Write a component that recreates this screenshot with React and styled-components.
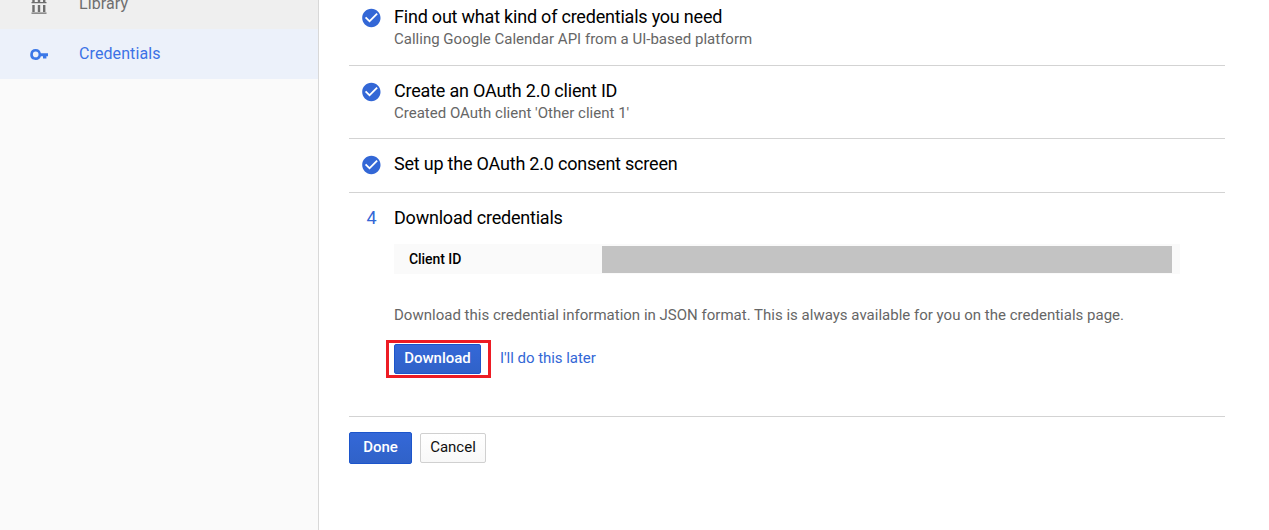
import React from "react";
import styled, { createGlobalStyle } from "styled-components";

const GlobalStyle = createGlobalStyle`
  * { box-sizing: border-box; }
  body {
    margin: 0;
    background: #fff;
    font-family: Roboto, "Liberation Sans", sans-serif;
    overflow: hidden;
  }
`;

const Page = styled.div`
  display: flex;
  height: 530px;
  overflow: hidden;
`;

const Sidebar = styled.nav`
  flex: none;
  width: 319px;
  background: #fafafa;
  border-right: 1px solid #d8d8d8;
`;

const NavItem = styled.a`
  display: flex;
  align-items: center;
  height: 50px;
  padding-left: 29px;
  font-size: 16px;
  line-height: 20px;
  letter-spacing: 0.1px;
  color: ${(p) => (p.$active ? "#3b72e6" : "#6e6e6e")};
  background: ${(p) => (p.$active ? "#ecf1fa" : "#efefef")};
  &:first-child { margin-top: -21px; }
  svg { flex: none; margin-right: 30px; }
`;

const Main = styled.main`
  width: 876px;
  margin-left: 30px;
`;

const Step = styled.section`
  display: flex;
  height: ${(p) => p.$height}px;
  padding-top: ${(p) => p.$top ?? 14}px;
  border-bottom: 1px solid #d3d3d3;
`;

const Marker = styled.div`
  flex: none;
  display: flex;
  justify-content: center;
  width: 45px;
  height: 22px;
  font-size: 18px;
  line-height: 22px;
  color: #3367d6;
  svg { margin-top: 1px; }
`;

const StepBody = styled.div`
  flex: 1;
  min-width: 0;
`;

const StepTitle = styled.h2`
  margin: 0;
  font-size: 18px;
  font-weight: 400;
  line-height: 22px;
  letter-spacing: -0.21px;
  color: #000;
  white-space: nowrap;
`;

const Description = styled.p`
  margin: 0;
  font-size: 15px;
  line-height: 22px;
  letter-spacing: 0.01px;
  color: #666;
  white-space: nowrap;
`;

const CredentialRow = styled.div`
  display: flex;
  align-items: center;
  width: 786px;
  height: 30px;
  margin: 15px 0 30px;
  background: #fafafa;
`;

const CredentialLabel = styled.div`
  width: 208px;
  padding-left: 15px;
  font-size: 14px;
  font-weight: 500;
  letter-spacing: -0.06px;
  color: #000;
`;

const RedactedValue = styled.div`
  width: 570px;
  height: 27px;
  margin-top: 1px;
  background: #c3c3c3;
`;

const Actions = styled.div`
  display: flex;
  align-items: center;
  margin: 14px 0 0 -8px;
`;

const Highlight = styled.div`
  display: flex;
  align-items: center;
  width: 105px;
  height: 38px;
  padding-left: 5px;
  border: 3px solid #ed1c24;
`;

const Button = styled.button`
  width: ${(p) => p.$width}px;
  height: ${(p) => p.$height}px;
  padding: 0 0 3px;
  border: 1px solid ${(p) => (p.$primary ? "#1c55cb" : "#d0d0d0")};
  border-radius: 2px;
  background: ${(p) =>
    p.$primary
      ? "linear-gradient(#3468d8, #3062c8)"
      : "linear-gradient(#fff, #f8f8f8)"};
  color: ${(p) => (p.$primary ? "#fff" : "#111")};
  font-family: inherit;
  font-size: 15px;
  font-weight: ${(p) => (p.$primary ? 500 : 400)};
  white-space: nowrap;
`;

const LaterLink = styled.a`
  margin: -3px 0 0 9px;
  font-size: 15px;
  line-height: 20px;
  letter-spacing: -0.04px;
  color: #3367d6;
`;

const Footer = styled.footer`
  display: flex;
  align-items: center;
  gap: 8px;
  padding-top: 15px;
`;

const LibraryIcon = () => (
  <svg width="20" height="20" viewBox="0 0 20 20" fill="#6e6e6e">
    <path d="M3.3 3h2.4v5H3.3zM8.8 3h2.4v5H8.8zM14 3h2.4v5H14zM2.5 8h15v1.2h-15zM3.3 11h2.4v7H3.3zM8.8 11h2.4v7H8.8zM14 11h2.4v7H14zM2.5 18.4h15V19.8h-15z" />
  </svg>
);

const KeyIcon = () => (
  <svg width="20" height="20" viewBox="0 0 20 20" fill="#3b78e7">
    <path
      fillRule="evenodd"
      d="M6.7 5a5.5 5.5 0 1 0 5.2 7.3H14V14.6h3.4v-2.3H19V9.2H11.9A5.5 5.5 0 0 0 6.7 5zm0 2.6a2.8 2.8 0 1 1 0 5.6 2.8 2.8 0 0 1 0-5.6z"
    />
  </svg>
);

const CheckIcon = () => (
  <svg width="22" height="22" viewBox="0.7 0 24 24" fill="#3367d6">
    <path d="M12 2C6.48 2 2 6.48 2 12s4.48 10 10 10 10-4.48 10-10S17.52 2 12 2zm-2 15l-5-5 1.41-1.41L10 14.17l7.59-7.59L19 8l-9 9z" />
  </svg>
);

export default function App() {
  return (
    <>
      <GlobalStyle />
      <Page>
        <Sidebar>
          <NavItem>
            <LibraryIcon />
            <span>Library</span>
          </NavItem>
          <NavItem $active>
            <KeyIcon />
            <span>Credentials</span>
          </NavItem>
        </Sidebar>
        <Main>
          <Step $height={66} $top={6}>
            <Marker><CheckIcon /></Marker>
            <StepBody>
              <StepTitle>Find out what kind of credentials you need</StepTitle>
              <Description>Calling Google Calendar API from a UI-based platform</Description>
            </StepBody>
          </Step>
          <Step $height={73}>
            <Marker><CheckIcon /></Marker>
            <StepBody>
              <StepTitle>Create an OAuth 2.0 client ID</StepTitle>
              <Description>Created OAuth client 'Other client 1'</Description>
            </StepBody>
          </Step>
          <Step $height={54}>
            <Marker><CheckIcon /></Marker>
            <StepBody>
              <StepTitle>Set up the OAuth 2.0 consent screen</StepTitle>
            </StepBody>
          </Step>
          <Step $height={224}>
            <Marker>4</Marker>
            <StepBody>
              <StepTitle>Download credentials</StepTitle>
              <CredentialRow>
                <CredentialLabel>Client ID</CredentialLabel>
                <RedactedValue />
              </CredentialRow>
              <Description>
                Download this credential information in JSON format. This is always available for you on the credentials page.
              </Description>
              <Actions>
                <Highlight>
                  <Button $primary $width={87} $height={30}>Download</Button>
                </Highlight>
                <LaterLink>I'll do this later</LaterLink>
              </Actions>
            </StepBody>
          </Step>
          <Footer>
            <Button $primary $width={63} $height={32}>Done</Button>
            <Button $width={66} $height={30}>Cancel</Button>
          </Footer>
        </Main>
      </Page>
    </>
  );
}
